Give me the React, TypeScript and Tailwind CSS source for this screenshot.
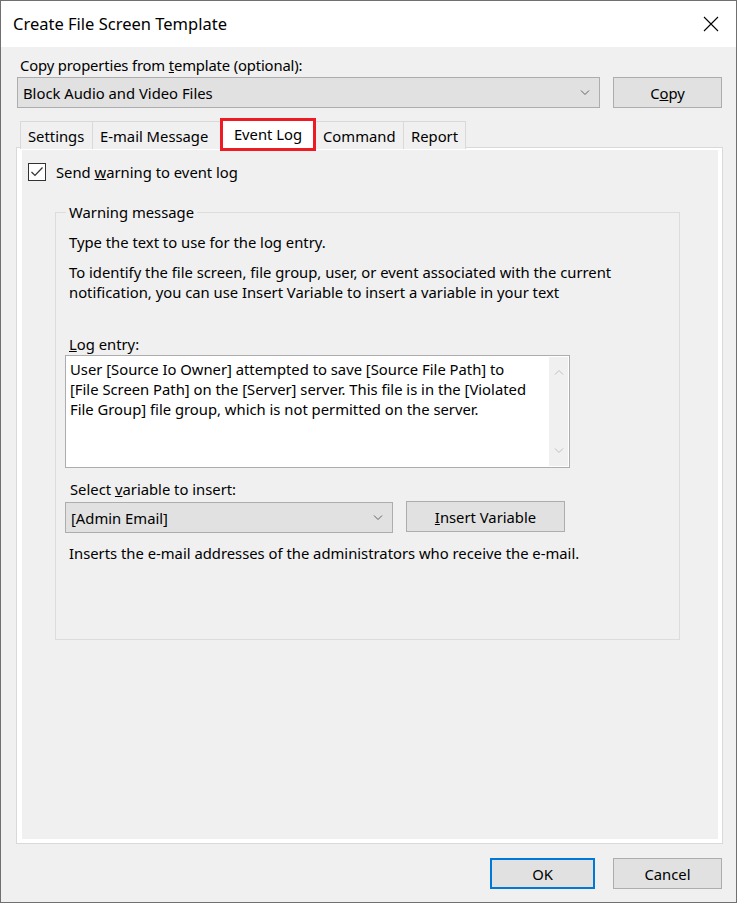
import React from 'react';

const Chevron: React.FC<{ up?: boolean; color?: string }> = ({ up, color = '#606060' }) => (
  <svg width="10" height="6" viewBox="0 0 10 6" className="block">
    <path
      d={up ? 'M1 5.5 L5 1.5 L9 5.5' : 'M1 0.5 L5 4.5 L9 0.5'}
      fill="none"
      stroke={color}
      strokeWidth="1"
    />
  </svg>
);

const Combo: React.FC<{ value: string; className: string }> = ({ value, className }) => (
  <div
    className={`flex items-center justify-between border border-[#adadad] bg-[#e1e1e1] pl-[5px] pr-[9px] ${className}`}
  >
    <span>{value}</span>
    <Chevron />
  </div>
);

const Button: React.FC<{ children: React.ReactNode; className: string }> = ({ children, className }) => (
  <div className={`flex items-center justify-center bg-[#e1e1e1] ${className}`}>{children}</div>
);

const tabs = [
  { label: 'Settings', w: 'w-[73px]' },
  { label: 'E-mail Message', w: 'w-[129px]' },
  { label: 'Event Log', w: 'w-[96px]' },
  { label: 'Command', w: 'w-[89px]' },
  { label: 'Report', w: 'w-[63px]' },
];

const App: React.FC = () => {
  return (
    <div
      className="w-[737px] h-[903px] bg-[#f0f0f0] border border-[#707070] flex flex-col text-[14.8px] leading-[20px] text-black"
      style={{ fontFamily: '"Noto Sans", "Open Sans", sans-serif' }}
    >
      {/* title bar */}
      <div className="h-[46px] bg-white flex items-center justify-between pl-[12px] pr-[17px] shrink-0">
        <span className="text-[16.5px]">Create File Screen Template</span>
        <svg width="16" height="16" viewBox="0 0 16 16">
          <path d="M1 1 L15 15 M15 1 L1 15" stroke="#000" strokeWidth="1.1" />
        </svg>
      </div>

      <div className="pl-[16px] pr-[14px] flex flex-col">
        <div className="mt-[8px] pl-[3px] tracking-[-0.15px]">
          Copy properties from <span className="underline">t</span>emplate (optional):
        </div>
        <div className="flex gap-[13px] mt-[2px]">
          <Combo value="Block Audio and Video Files" className="w-[583px] h-[31px]" />
          <Button className="w-[109px] h-[31px] border border-[#adadad]">
            C<span className="underline">o</span>py
          </Button>
        </div>

        {/* tabs */}
        <div className="flex items-end mt-[8px] ml-[3px] h-[33px] relative z-10">
          {tabs.map((t) =>
            t.label === 'Event Log' ? (
              <div
                key={t.label}
                className={`relative h-[33px] ${t.w} -ml-px bg-white flex items-center justify-center -mb-[2px]`}
              >
                <span className="-mt-[2px]">{t.label}</span>
                <div className="absolute inset-0 border-[3px] border-[#ed1c24]" />
              </div>
            ) : (
              <div
                key={t.label}
                className={`h-[28px] ${t.w} pl-[7px] border-t border-l border-r border-[#d9d9d9] bg-[#f0f0f0] flex items-center -ml-px first:ml-0 whitespace-nowrap`}
              >
                {t.label}
              </div>
            )
          )}
        </div>

        {/* tab panel */}
        <div className="-ml-[1px] -mt-[2px] w-[707px] h-[697px] border border-[#d9d9d9]">
          <div className="h-full border-white border-l-[5px] border-t-[2px] border-r-[4px] border-b-[4px] bg-[#f0f0f0] flex flex-col">
            <div className="flex items-center mt-[12px] ml-[6px] h-[20px]">
              <div className="w-[18px] h-[18px] border border-[#333] bg-white flex items-center justify-center">
                <svg width="14" height="12" viewBox="0 0 14 12">
                  <path d="M1.5 6 L5 9.5 L12.5 1.5" fill="none" stroke="#333" strokeWidth="1.2" />
                </svg>
              </div>
              <span className="ml-[10px]">
                Send <span className="underline">w</span>arning to event log
              </span>
            </div>

            <fieldset className="ml-[33px] mt-[20px] w-[625px] h-[438px] border border-[#dcdcdc] pl-[13px]">
              <legend className="px-[3px] -ml-[3px]">Warning message</legend>
              <div className="mt-[10px]">Type the text to use for the log entry.</div>
              <div className="mt-[10px]">
                To identify the file screen, file group, user, or event associated with the current
                <br />
                notification, you can use Insert Variable to insert a variable in your text
              </div>
              <div className="mt-[32px]">
                <span className="underline">L</span>og entry:
              </div>
              <div className="-ml-[4px] mt-[1px] w-[505px] h-[113px] border border-[#adadad] bg-white flex">
                <div className="flex-1 pl-[4px] pt-[3px] whitespace-nowrap">
                  User [Source Io Owner] attempted to save [Source File Path] to
                  <br />
                  [File Screen Path] on the [Server] server. This file is in the [Violated
                  <br />
                  File Group] file group, which is not permitted on the server.
                </div>
                <div className="w-[19px] my-[1px] mr-[1px] bg-[#f0f0f0] flex flex-col items-center justify-between py-[12px]">
                  <Chevron up color="#bfbfbf" />
                  <Chevron color="#bfbfbf" />
                </div>
              </div>
              <div className="mt-[11px] pl-[1px]">
                Select <span className="underline">v</span>ariable to insert:
              </div>
              <div className="flex items-start gap-[13px] -ml-[4px] mt-[3px]">
                <Combo value="[Admin Email]" className="w-[328px] h-[31px]" />
                <Button className="w-[159px] h-[31px] border border-[#adadad] -mt-[1px]">
                  <span className="underline">I</span>nsert Variable
                </Button>
              </div>
              <div className="mt-[10px]">
                Inserts the e-mail addresses of the administrators who receive the e-mail.
              </div>
            </fieldset>
          </div>
        </div>

        {/* footer buttons */}
        <div className="flex justify-end gap-[18px] mt-[14px]">
          <Button className="w-[105px] h-[31px] border-2 border-[#0078d7]">OK</Button>
          <Button className="w-[109px] h-[31px] border border-[#adadad]">Cancel</Button>
        </div>
      </div>
    </div>
  );
};

export default App;
